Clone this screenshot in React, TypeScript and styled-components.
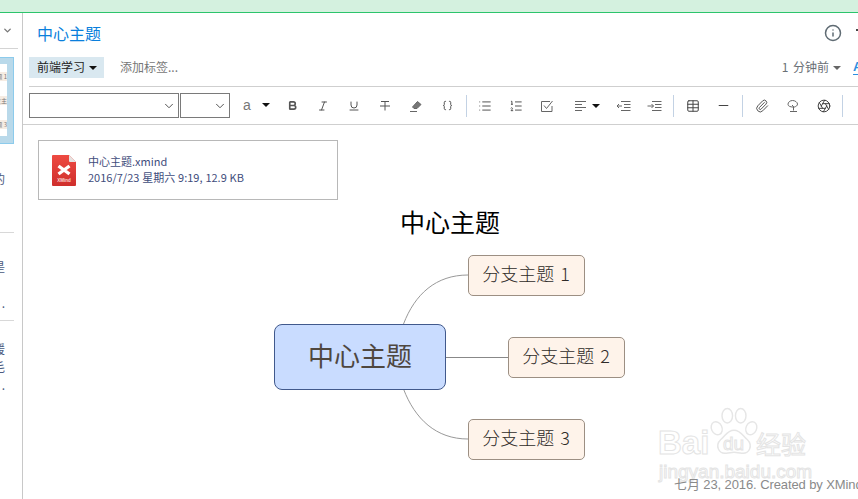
import styled, { createGlobalStyle } from "styled-components";
import {
  Aperture,
  Bold,
  Braces,
  ChevronDown,
  Info,
  Italic,
  List,
  ListOrdered,
  Minus,
  Paperclip,
  Table,
  Underline,
} from "lucide-react";

const GlobalStyle = createGlobalStyle`
  html, body {
    margin: 0;
    padding: 0;
    background: #fff;
    overflow: hidden;
  }

  body {
    font-family: "Noto Sans CJK SC", "Liberation Sans", sans-serif;
  }
`;

const StrikeIcon = () => (
  <svg width="14" height="14" viewBox="0 0 14 14" fill="none" stroke="#555" strokeWidth="1">
    <path d="M3 2.500h8M7 2.500v9M2 7h10" />
  </svg>
);

const EraserIcon = () => (
  <svg width="14" height="14" viewBox="0 0 14 14" fill="none" stroke="#666" strokeWidth="1">
    <path d="M8.500 2.500l3.500 3-4 4H5L3.500 8z" fill="#777" />
    <path d="M1 12.500h7" />
  </svg>
);

const CheckboxIcon = () => (
  <svg width="14" height="14" viewBox="0 0 14 14" fill="none" stroke="#666" strokeWidth="1">
    <path d="M12 7v5.500H1.500v-10H10" />
    <path d="M4 6.500l2.500 3L12.500 2" />
  </svg>
);

const AlignIcon = () => (
  <svg width="13" height="12" viewBox="0 0 13 12" fill="none" stroke="#666" strokeWidth="1">
    <path d="M1 1.500h11M1 4.500h7M1 7.500h11M1 10.500h7" />
  </svg>
);

const OutdentIcon = () => (
  <svg width="15" height="12" viewBox="0 0 15 12" fill="none" stroke="#666" strokeWidth="1">
    <path d="M5 1.500h9.500M8 4.500h6.500M8 7.500h6.500M5 10.500h9.500M1 6h5M3 4L1 6l2 2" />
  </svg>
);

const IndentIcon = () => (
  <svg width="15" height="12" viewBox="0 0 15 12" fill="none" stroke="#666" strokeWidth="1">
    <path d="M5 1.500h9.500M8 4.500h6.500M8 7.500h6.500M5 10.500h9.500M0.500 6h6M4.500 4l2 2-2 2" />
  </svg>
);

const TreeIcon = () => (
  <svg width="14" height="14" viewBox="0 0 14 14" fill="none" stroke="#666" strokeWidth="1">
    <path d="M7 8c-2.500 0-5-.7-5-2.700C2 3.300 4 1.500 6.500 1.500s5 1.700 5 3.600c0 1.500-1.500 2.400-3 2.900z" />
    <path d="M6 6l1.500 1.500v4M4 12.500h7" />
  </svg>
);

const FileIcon = () => (
  <svg width="24" height="31" viewBox="0 0 24 31">
    <defs>
      <linearGradient id="fileRed" x1="0" y1="0" x2="0" y2="1">
        <stop offset="0" stopColor="#ee4a42" />
        <stop offset="1" stopColor="#cf2f2c" />
      </linearGradient>
    </defs>
    <path d="M0 1q0-1 1-1h16l7 7v23q0 1-1 1H1q-1 0-1-1z" fill="url(#fileRed)" />
    <path d="M17 0l7 7h-6q-1 0-1-1z" fill="#e6e2e0" />
    <path d="M6.500 11l11 8M17.500 11l-11 8" stroke="#fff" strokeWidth="3.400" />
    <text x="12" y="26.500" fontSize="4.500" fontWeight="700" fill="#fbd5d2" textAnchor="middle" fontFamily="Liberation Sans">
      XMind
    </text>
  </svg>
);

const PawIcon = () => (
  <svg width="48" height="54" viewBox="0 0 50 54" fill="#fff" stroke="#e6e6e6" strokeWidth="1.500">
    <ellipse cx="7" cy="21" rx="5.500" ry="7" transform="rotate(-25 7 21)" />
    <ellipse cx="18" cy="8" rx="5.500" ry="7.500" />
    <ellipse cx="32" cy="8" rx="5.500" ry="7.500" />
    <ellipse cx="43" cy="21" rx="5.500" ry="7" transform="rotate(25 43 21)" />
    <path d="M25 23c7 0 9 6 14 10 6 6 2 15-6 14-3 0-5-1-8-1s-5 1-8 1c-8 1-12-8-6-14 5-4 7-10 14-10z" />
  </svg>
);

const App = () => {
  return (
    <Page>
      <GlobalStyle />
      <TopBar />
      <Workspace>
        <Sidebar>
          <SideHead>
            <ChevronDown size={11} strokeWidth={3} color="#777" />
          </SideHead>
          <Thumbnail>
            <ThumbInner>
              <ThumbNode>题 1</ThumbNode>
              <ThumbNode>支主</ThumbNode>
              <ThumbNode>题 3</ThumbNode>
            </ThumbInner>
          </Thumbnail>
          <SnippetLine $top={26}>的</SnippetLine>
          <SideRule $top={44} />
          <SnippetLine $top={25}>是</SnippetLine>
          <SnippetLine $top={18}>.</SnippetLine>
          <SideRule $top={8} />
          <SnippetLine $top={19}>援</SnippetLine>
          <SnippetLine $top={0}>毛</SnippetLine>
          <SnippetLine $top={0}>.</SnippetLine>
        </Sidebar>

        <Main>
          <Header>
            <TitleRow>
              <NoteTitle>中心主题</NoteTitle>
              <TitleTools>
                <Info size={18} strokeWidth={2} color="#5f6b73" />
                <ClippedTool />
              </TitleTools>
            </TitleRow>
            <TagRow>
              <Tag>
                <TagLabel>前端学习</TagLabel>
                <Caret $color="#111" />
              </Tag>
              <AddTag>添加标签...</AddTag>
              <TimeInfo>
                <TagLabel>1 分钟前</TagLabel>
                <Caret $color="#666" />
              </TimeInfo>
              <FontLink>A</FontLink>
            </TagRow>
          </Header>

          <Toolbar>
            <SelectBox $width={150}>
              <ChevronDown size={14} strokeWidth={1} absoluteStrokeWidth color="#555" />
            </SelectBox>
            <SelectBox $width={50}>
              <ChevronDown size={14} strokeWidth={1} absoluteStrokeWidth color="#555" />
            </SelectBox>
            <ColorButton>
              a
              <Caret $color="#111" />
            </ColorButton>
            <ToolButton><Bold size={11} strokeWidth={3.6} color="#555" /></ToolButton>
            <ToolButton><Italic size={12} strokeWidth={1} absoluteStrokeWidth color="#555" /></ToolButton>
            <ToolButton><Underline size={12} strokeWidth={1} absoluteStrokeWidth color="#555" /></ToolButton>
            <ToolButton><StrikeIcon /></ToolButton>
            <ToolButton><EraserIcon /></ToolButton>
            <ToolButton><Braces size={11} strokeWidth={1} absoluteStrokeWidth color="#555" /></ToolButton>
            <ToolSeparator />
            <ToolButton><List size={14} strokeWidth={1} absoluteStrokeWidth color="#555" /></ToolButton>
            <ToolButton><ListOrdered size={14} strokeWidth={1} absoluteStrokeWidth color="#555" /></ToolButton>
            <ToolButton><CheckboxIcon /></ToolButton>
            <AlignButton>
              <AlignIcon />
              <Caret $color="#111" />
            </AlignButton>
            <ToolButton><OutdentIcon /></ToolButton>
            <ToolButton><IndentIcon /></ToolButton>
            <ToolSeparator />
            <ToolButton><Table size={14} strokeWidth={1} absoluteStrokeWidth color="#444" /></ToolButton>
            <ToolButton><Minus size={15} strokeWidth={1} absoluteStrokeWidth color="#444" /></ToolButton>
            <ToolSeparator />
            <ToolButton><Paperclip size={14} strokeWidth={1} absoluteStrokeWidth color="#555" /></ToolButton>
            <ToolButton><TreeIcon /></ToolButton>
            <ToolButton><Aperture size={14} strokeWidth={1} absoluteStrokeWidth color="#444" /></ToolButton>
            <ToolSeparator />
          </Toolbar>

          <Content>
            <Attachment>
              <FileIcon />
              <AttachmentText>
                <span>中心主题.xmind</span>
                <span>2016/7/23 星期六 9:19, 12.9 KB</span>
              </AttachmentText>
            </Attachment>

            <MapTitle>中心主题</MapTitle>

            <MapCanvas>
              <Connectors width="824" height="262" viewBox="0 0 824 262" fill="none">
                <path d="M365.500 87C377 57 398 38 430 38" stroke="#999" />
                <path d="M408 120.500H470" stroke="#888" />
                <path d="M365.500 152C377 182 398 202 430 202" stroke="#999" />
              </Connectors>
              <CentralNode>中心主题</CentralNode>
              <BranchNode $x={430} $y={18}>分支主题 1</BranchNode>
              <BranchNode $x={470} $y={100}>分支主题 2</BranchNode>
              <BranchNode $x={430} $y={182}>分支主题 3</BranchNode>
              <Watermark>
                <PawWrap>
                  <PawIcon />
                  <PawLabel>du</PawLabel>
                </PawWrap>
                <WatermarkBrand>Bai</WatermarkBrand>
                <WatermarkCn>经验</WatermarkCn>
                <WatermarkUrl>jingyan.baidu.com</WatermarkUrl>
              </Watermark>
              <MapFooter>七月 23, 2016. Created by XMind</MapFooter>
            </MapCanvas>
          </Content>
        </Main>
      </Workspace>
    </Page>
  );
};

export default App;

const Page = styled.div`
  display: flex;
  flex-direction: column;
  width: 858px;
  height: 499px;
  overflow: hidden;
  background: #fff;
`;

const TopBar = styled.div`
  flex: none;
  height: 12px;
  background: #d4f1df;
  border-bottom: 1px solid #2cc46b;
`;

const Workspace = styled.div`
  display: flex;
  flex: 1;
  min-height: 0;
`;

const Sidebar = styled.aside`
  flex: none;
  display: flex;
  flex-direction: column;
  width: 22px;
  border-right: 1px solid #c8c8c8;
  overflow: hidden;
`;

const SideHead = styled.div`
  display: flex;
  align-items: center;
  justify-content: flex-start;
  width: 18px;
  height: 36px;
  padding-left: 2px;
  box-sizing: border-box;
  border-bottom: 1px solid #d4d4d4;
`;

const Thumbnail = styled.div`
  width: 14px;
  height: 87px;
  margin-top: 8px;
  padding: 6px 6px 7px 0;
  box-sizing: border-box;
  background: #b9d9ea;
  border: 1px solid #8ccbec;
  border-left: 0;
`;

const ThumbInner = styled.div`
  display: flex;
  flex-direction: column;
  justify-content: space-around;
  height: 100%;
  background: #fff;
  overflow: hidden;
`;

const ThumbNode = styled.div`
  display: flex;
  justify-content: flex-end;
  height: 9px;
  font-size: 6px;
  line-height: 9px;
  white-space: nowrap;
  color: #777;
  background: #f6ece3;
`;

const SnippetLine = styled.div<{ $top: number }>`
  display: flex;
  justify-content: flex-end;
  width: 5px;
  height: 18px;
  margin-top: ${(p) => p.$top}px;
  font-size: 12px;
  line-height: 18px;
  white-space: nowrap;
  color: #4a5a80;
  overflow: hidden;
`;

const SideRule = styled.div<{ $top: number }>`
  flex: none;
  width: 14px;
  height: 1px;
  margin-top: ${(p) => p.$top}px;
  background: #d8d8d8;
`;

const Main = styled.main`
  display: flex;
  flex: 1;
  flex-direction: column;
  min-width: 0;
`;

const Header = styled.header`
  flex: none;
  padding-left: 6px;
`;

const TitleRow = styled.div`
  display: flex;
  align-items: center;
  justify-content: space-between;
  height: 40px;
  padding-left: 8px;
`;

const NoteTitle = styled.h1`
  margin: 0;
  padding-bottom: 1px;
  font-size: 16px;
  font-weight: 400;
  color: #0a7fdc;
`;

const TitleTools = styled.div`
  display: flex;
  align-items: center;
  gap: 14px;
`;

const ClippedTool = styled.span`
  width: 2px;
  height: 2px;
  margin-bottom: 6px;
  background: #444;
`;

const TagRow = styled.div`
  display: flex;
  align-items: center;
  height: 21px;
  margin-top: 4px;
  padding-bottom: 8px;
  border-bottom: 1px solid #cfcfcf;
`;

const Tag = styled.div`
  display: flex;
  align-items: center;
  gap: 4px;
  height: 21px;
  padding: 0 7px 0 8px;
  font-size: 12px;
  color: #222;
  background: #d9e8f0;
`;

const TagLabel = styled.span`
  padding-bottom: 2px;
  word-spacing: 2px;
`;

const AddTag = styled.span`
  margin-left: 16px;
  padding-bottom: 2px;
  font-size: 12px;
  color: #777;
`;

const TimeInfo = styled.div`
  display: flex;
  align-items: center;
  gap: 4px;
  margin-left: auto;
  font-size: 12px;
  color: #6a7076;
`;

const FontLink = styled.span`
  flex: none;
  width: 5px;
  margin-left: 12px;
  overflow: hidden;
  font-family: "Liberation Sans", sans-serif;
  font-size: 13px;
  font-weight: 700;
  line-height: 14px;
  color: #2d8fe0;
  border-bottom: 1px solid #2d8fe0;
`;

const Caret = styled.i<{ $color: string }>`
  display: inline-block;
  width: 0;
  height: 0;
  border-style: solid;
  border-width: 4px 4px 0;
  border-color: ${(p) => p.$color} transparent transparent;
`;

const Toolbar = styled.div`
  flex: none;
  display: flex;
  align-items: center;
  height: 37px;
  padding-left: 6px;
  border-bottom: 1px solid #cfcfcf;
`;

const SelectBox = styled.div<{ $width: number }>`
  display: flex;
  align-items: center;
  justify-content: flex-end;
  flex: none;
  width: ${(p) => p.$width}px;
  height: 25px;
  margin-right: 1px;
  padding-right: 2px;
  box-sizing: border-box;
  border: 1px solid #7a7a7a;
`;

const ToolButton = styled.div`
  display: flex;
  flex: none;
  align-items: center;
  justify-content: center;
  width: 31px;
  height: 25px;
`;

const ColorButton = styled.div`
  display: flex;
  flex: none;
  align-items: center;
  gap: 11px;
  width: 44.5px;
  height: 25px;
  margin-left: 1px;
  padding: 0 0 2px 11px;
  box-sizing: border-box;
  font-family: "Liberation Sans", sans-serif;
  font-size: 14px;
  color: #777;
`;

const AlignButton = styled(ToolButton)`
  gap: 5px;
  width: 45.5px;
  padding-left: 4px;
  box-sizing: border-box;
`;

const ToolSeparator = styled.div`
  flex: none;
  width: 1px;
  height: 22px;
  margin: 0 3px;
  background: #c3d2e4;
`;

const Content = styled.div`
  flex: 1;
  display: flex;
  flex-direction: column;
  min-height: 0;
  padding: 15px 0 0 15px;
`;

const Attachment = styled.div`
  display: flex;
  flex: none;
  align-items: center;
  gap: 12px;
  width: 300px;
  height: 60px;
  padding-left: 13px;
  box-sizing: border-box;
  border: 1px solid #b8b8b8;
`;

const AttachmentText = styled.div`
  display: flex;
  flex-direction: column;
  padding-bottom: 2px;
  font-size: 11px;
  line-height: 16px;
  word-spacing: 0.4px;
  color: #3f4d7c;
`;

const MapTitle = styled.h2`
  flex: none;
  width: 824px;
  margin: 7px 0 0;
  padding-bottom: 2px;
  font-size: 25px;
  font-weight: 400;
  line-height: 28px;
  text-align: center;
  color: #000;
`;

const MapCanvas = styled.div`
  position: relative;
  flex: none;
  width: 824px;
  height: 262px;
`;

const Connectors = styled.svg`
  position: absolute;
  inset: 0;
`;

const CentralNode = styled.div`
  position: absolute;
  left: 236px;
  top: 87px;
  display: flex;
  align-items: center;
  justify-content: center;
  width: 172px;
  height: 66px;
  padding-bottom: 5px;
  box-sizing: border-box;
  font-size: 26px;
  color: #4f473f;
  background: #c9dcff;
  border: 1px solid #41598c;
  border-radius: 8px;
`;

const BranchNode = styled.div<{ $x: number; $y: number }>`
  position: absolute;
  left: ${(p) => p.$x}px;
  top: ${(p) => p.$y}px;
  display: flex;
  align-items: center;
  justify-content: center;
  width: 117px;
  height: 41px;
  padding: 0 1px 5px 0;
  box-sizing: border-box;
  font-size: 18px;
  font-weight: 300;
  word-spacing: 2px;
  color: #2f2b28;
  background: #fef3ea;
  border: 1px solid #9c8f83;
  border-radius: 5px;
`;

const MapFooter = styled.div`
  position: absolute;
  left: 636px;
  top: 238px;
  font-family: "Liberation Sans", "Noto Sans CJK SC", sans-serif;
  font-size: 13px;
  line-height: 20px;
  letter-spacing: -0.1px;
  white-space: nowrap;
  color: #8a8a8a;
`;

const Watermark = styled.div`
  position: absolute;
  left: 618px;
  top: 170px;
  width: 160px;
  height: 76px;
  color: #fff;
  -webkit-text-stroke: 1px #e4e4e4;
`;

const PawWrap = styled.div`
  position: absolute;
  left: 54px;
  top: 0;
`;

const PawLabel = styled.span`
  position: absolute;
  left: 13px;
  top: 27px;
  font-family: "Liberation Sans", sans-serif;
  font-size: 19px;
  line-height: 20px;
`;

const WatermarkBrand = styled.span`
  position: absolute;
  left: 2px;
  top: 18px;
  font-family: "Liberation Sans", sans-serif;
  font-size: 33px;
  font-weight: 700;
  line-height: 36px;
`;

const WatermarkCn = styled.span`
  position: absolute;
  left: 100px;
  top: 20px;
  font-size: 25px;
  line-height: 32px;
`;

const WatermarkUrl = styled.span`
  position: absolute;
  left: 3px;
  top: 54px;
  font-family: "Liberation Sans", sans-serif;
  font-size: 19px;
  line-height: 22px;
`;
